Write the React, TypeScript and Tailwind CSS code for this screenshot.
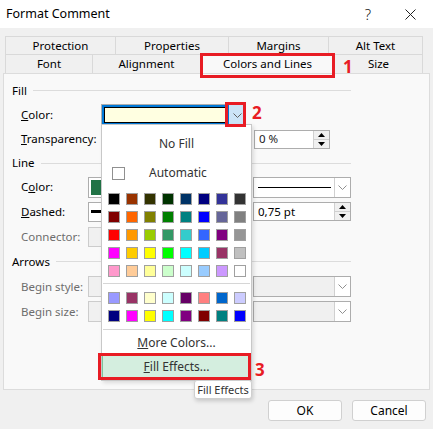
import React from "react";

const Chevron = ({ color = "#606060" }: { color?: string }) => (
  <svg width="9" height="5" viewBox="0 0 9 5">
    <polyline points="0.5,0.5 4.5,4.5 8.5,0.5" fill="none" stroke={color} strokeWidth="1" />
  </svg>
);

const SpinBtns = () => (
  <div className="flex flex-col w-[16px] h-full border-l border-[#d0d0d0]">
    <div className="flex-1 flex items-center justify-center bg-[#f0f0f0] border-b border-[#d0d0d0]">
      <svg width="7" height="4" viewBox="0 0 7 4"><polygon points="3.5,0 7,4 0,4" fill="#000" /></svg>
    </div>
    <div className="flex-1 flex items-center justify-center bg-[#f0f0f0]">
      <svg width="7" height="4" viewBox="0 0 7 4"><polygon points="0,0 7,0 3.5,4" fill="#000" /></svg>
    </div>
  </div>
);

const palette: string[][] = [
  ["#000000", "#993300", "#333300", "#003300", "#003366", "#000080", "#333399", "#333333"],
  ["#800000", "#FF6600", "#808000", "#008000", "#008080", "#0000FF", "#666699", "#808080"],
  ["#FF0000", "#FF9900", "#99CC00", "#339966", "#33CCCC", "#3366FF", "#800080", "#969696"],
  ["#FF00FF", "#FFCC00", "#FFFF00", "#00FF00", "#00FFFF", "#00CCFF", "#993366", "#C0C0C0"],
  ["#FF99CC", "#FFCC99", "#FFFF99", "#CCFFCC", "#CCFFFF", "#99CCFF", "#CC99FF", "#FFFFFF"],
];
const palette2: string[][] = [
  ["#9999FF", "#993366", "#FFFFCC", "#CCFFFF", "#660066", "#FF8080", "#0066CC", "#CCCCFF"],
  ["#000080", "#FF00FF", "#FFFF00", "#00FFFF", "#800080", "#800000", "#008080", "#0000FF"],
];

const SwatchRow = ({ colors }: { colors: string[] }) => (
  <div className="flex gap-[6px]">
    {colors.map((c, i) => (
      <div key={i} className="w-[12px] h-[12px] border border-[#a0a0a0]" style={{ backgroundColor: c }} />
    ))}
  </div>
);

const SectionHeader = ({ label, h }: { label: string; h: string }) => (
  <div className={`flex items-center pl-[8px] ${h}`}>
    <span>{label}</span>
    <div className="flex-1 h-px bg-[#dcdcdc] ml-[6px]" />
  </div>
);

export default function App() {
  return (
    <div className="relative w-[433px] h-[429px] overflow-hidden bg-[#f0f0f0] font-['Noto_Sans',sans-serif] text-[11.5px] text-black leading-none">
      {/* Title bar */}
      <div className="flex items-center h-[28px] bg-white pl-[6px]">
        <span className="text-[12.5px]">Format Comment</span>
        <span className="ml-auto text-[15px] font-light text-[#222]">?</span>
        <svg className="ml-[34px] mr-[17px]" width="11" height="11" viewBox="0 0 11 11">
          <line x1="0.5" y1="0.5" x2="10.5" y2="10.5" stroke="#222" strokeWidth="1" />
          <line x1="10.5" y1="0.5" x2="0.5" y2="10.5" stroke="#222" strokeWidth="1" />
        </svg>
      </div>

      {/* Tabs */}
      <div className="pt-[8px]">
        <div className="flex ml-[5px] h-[18px]">
          {[
            ["Protection", "w-[110px]"],
            ["Properties", "w-[113px]"],
            ["Margins", "w-[100px]"],
            ["Alt Text", "w-[95px] border-r"],
          ].map(([t, w]) => (
            <div key={t} className={`${w} flex items-center justify-center border-t border-l border-[#d9d9d9] bg-[#f0f0f0]`}>
              {t}
            </div>
          ))}
        </div>
        <div className="flex ml-[5px] h-[19px] relative z-10">
          <div className="w-[87px] flex items-center justify-center border-t border-l border-[#d9d9d9]">Font</div>
          <div className="w-[108px] flex items-center justify-center border-t border-l border-[#d9d9d9]">Alignment</div>
          <div className="w-[135px] h-[20px] -mt-[1px] flex items-center justify-center border-t border-l border-r border-[#d9d9d9] bg-[#f9f9f9]">
            Colors and Lines
          </div>
          <div className="w-[88px] flex items-center justify-center border-t border-r border-[#d9d9d9]">Size</div>
        </div>
      </div>

      {/* Panel */}
      <div className="mx-[3px] h-[317px] border border-[#dcdcdc] bg-[#f9f9f9]">
        <div className="w-[347px] pt-[4px]">
          <SectionHeader label="Fill" h="h-[25px]" />
          <div className="flex items-center h-[24px] pl-[17px]">
            <span className="w-[80px]">
              <span className="underline">C</span>olor:
            </span>
            <div className="flex w-[145px] h-[22px] border border-[#adadad] bg-white">
              <div className="flex-1 border-2 border-[#0078d7]">
                <div className="h-full border border-black bg-[#ffffe1]" />
              </div>
              <div className="w-[16px] bg-[#cce4f7] flex items-center justify-center">
                <Chevron />
              </div>
            </div>
          </div>
          <div className="flex items-center h-[24px] pl-[17px]">
            <span>
              <span className="underline">T</span>ransparency:
            </span>
            <div className="ml-auto mr-[21px] flex w-[76px] h-[19px] border border-[#adadad] bg-white">
              <span className="flex-1 flex items-center pl-[4px] text-[#1a1a1a]">0 %</span>
              <SpinBtns />
            </div>
          </div>
          <SectionHeader label="Line" h="h-[24px]" />
          <div className="flex items-center h-[24px] pl-[17px]">
            <span className="w-[67px]">
              C<span className="underline">o</span>lor:
            </span>
            <div className="w-[60px] h-[21px] border border-[#adadad] bg-white p-[2px]">
              <div className="w-full h-full bg-[#217346]" />
            </div>
            <div className="ml-auto flex w-[98px] h-[21px] border border-[#adadad] bg-white">
              <div className="flex-1 flex items-center pl-[4px] pr-[3px]">
                <div className="w-full h-[1px] bg-black" />
              </div>
              <div className="w-[16px] flex items-center justify-center border-l border-[#d0d0d0]">
                <Chevron color="#909090" />
              </div>
            </div>
          </div>
          <div className="flex items-center h-[25px] pl-[17px]">
            <span className="w-[67px]">
              <span className="underline">D</span>ashed:
            </span>
            <div className="w-[60px] h-[20px] border border-[#adadad] bg-white flex items-center pl-[2px]">
              <div className="w-full h-[3px] bg-black" />
            </div>
            <div className="ml-auto flex w-[98px] h-[19px] border border-[#adadad] bg-white">
              <span className="flex-1 flex items-center pl-[4px]">0,75 pt</span>
              <SpinBtns />
            </div>
          </div>
          <div className="flex items-center h-[25px] pl-[17px]">
            <span className="w-[67px] text-[#6d6d6d]">Connector:</span>
            <div className="w-[60px] h-[20px] border border-[#cccccc] bg-[#f0f0f0]" />
          </div>
          <SectionHeader label="Arrows" h="h-[25px]" />
          {["Begin style:", "Begin size:"].map((l) => (
            <div key={l} className="flex items-center h-[25px] pl-[17px]">
              <span className="w-[67px] text-[#6d6d6d]">{l}</span>
              <div className="w-[60px] h-[21px] border border-[#cccccc] bg-[#f0f0f0]" />
              <div className="ml-auto flex w-[98px] h-[21px] border border-[#adadad] bg-[#f0f0f0]">
                <div className="flex-1" />
                <div className="w-[16px] flex items-center justify-center bg-white border-l border-[#d0d0d0]">
                  <Chevron color="#909090" />
                </div>
              </div>
            </div>
          ))}
        </div>
      </div>

      {/* Buttons */}
      <div className="flex justify-end gap-[10px] pr-[7px] mt-[10px]">
        <button className="w-[74px] h-[21px] rounded-[3px] border border-[#d0d0d0] bg-[#fdfdfd] text-[12px]">OK</button>
        <button className="w-[74px] h-[21px] rounded-[3px] border border-[#d0d0d0] bg-[#fdfdfd] text-[12px]">Cancel</button>
      </div>

      {/* Dropdown color menu */}
      <div className="absolute left-[101px] top-[124px] w-[151px] h-[257px] border border-[#c8c8c8] bg-white shadow-[2px_2px_4px_rgba(0,0,0,0.12)] flex flex-col text-[12px]">
        <div className="h-[3px]" />
        <div className="h-[31px] flex items-center justify-center text-[#333]">No Fill</div>
        <div className="h-[28px] flex items-center pl-[10px]">
          <div className="w-[13px] h-[13px] border border-[#909090]" />
          <span className="ml-[24px] text-[#333]">Automatic</span>
        </div>
        <div className="mt-[6px] pl-[6px] flex flex-col gap-[6px]">
          {palette.map((r, i) => (
            <SwatchRow key={i} colors={r} />
          ))}
        </div>
        <div className="mt-[6px] mx-[1px] h-px bg-[#d6d6d6]" />
        <div className="mt-[8px] pl-[6px] flex flex-col gap-[6px]">
          {palette2.map((r, i) => (
            <SwatchRow key={i} colors={r} />
          ))}
        </div>
        <div className="mt-[7px] mx-[1px] h-px bg-[#d6d6d6]" />
        <div className="h-[26px] flex items-center justify-center text-[#333]">
          <span className="underline">M</span>ore Colors...
        </div>
        <div className="h-[22px] mr-[1px] flex items-center justify-center bg-[#d4eedf] border-l border-[#7cc39a] text-[#333]">
          <span className="underline">F</span>ill Effects...
        </div>
      </div>

      {/* Tooltip */}
      <div className="absolute left-[194px] top-[380px] w-[58px] h-[19px] flex items-center justify-center bg-white border border-[#cfcfcf] rounded-[3px] shadow-[1px_2px_4px_rgba(0,0,0,0.18)] text-[11px] text-[#333]">
        Fill Effects
      </div>

      {/* Annotations */}
      <div className="absolute left-[200px] top-[53px] w-[135px] h-[25px] border-[3px] border-[#e81c24] z-20" />
      <span className="absolute left-[343px] top-[58px] text-[17px] font-bold text-[#e81c24] z-20">1</span>
      <div className="absolute left-[225px] top-[102px] w-[21px] h-[25px] border-[3px] border-[#e81c24] z-20" />
      <span className="absolute left-[252px] top-[104px] text-[17px] font-bold text-[#e81c24] z-20">2</span>
      <div className="absolute left-[98px] top-[353px] w-[153px] h-[27px] border-[3px] border-[#e81c24] z-20" />
      <span className="absolute left-[255px] top-[361px] text-[17px] font-bold text-[#e81c24] z-20">3</span>
    </div>
  );
}
